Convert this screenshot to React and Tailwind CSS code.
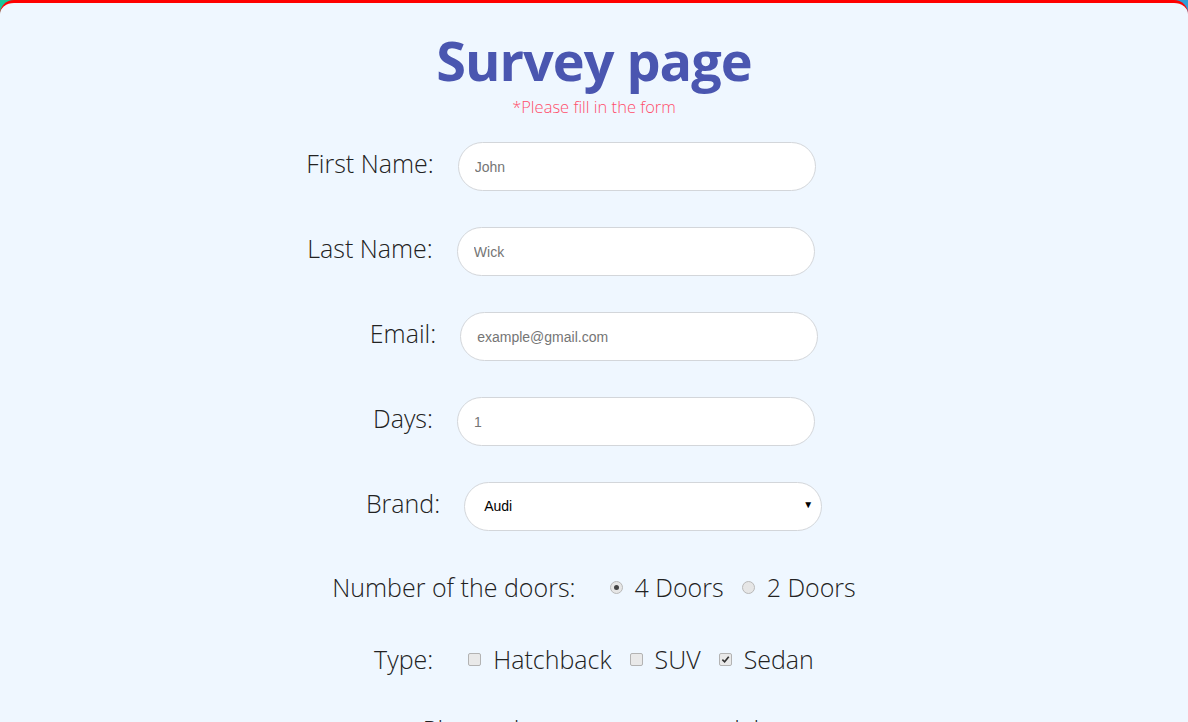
import React from "react";

const labelFont = { fontFamily: '"Open Sans", "Noto Sans", sans-serif' };

function Row({ label, children, shift }) {
  return (
    <div className={`flex items-center justify-center gap-[24px] ${shift ? "pr-[66px]" : ""}`}>
      <span className="pb-[8px] text-[25px] font-light leading-[32px] text-[#222]" style={labelFont}>
        {label}
      </span>
      {children}
    </div>
  );
}

function TextInput({ placeholder, type = "text" }) {
  return (
    <input
      type={type}
      placeholder={placeholder}
      className="h-[49px] w-[358px] rounded-full border border-[#d3d6da] bg-white px-[16px] text-[14px] text-black placeholder:text-[#757575] outline-none"
      style={{ fontFamily: '"Liberation Sans", Arial, sans-serif' }}
    />
  );
}

function Radio({ checked }) {
  return (
    <span className="flex h-[13px] w-[13px] items-center justify-center rounded-full border border-[#b9b9b9] bg-[#e6e6e6]">
      {checked && <span className="h-[5px] w-[5px] rounded-full bg-[#444]" />}
    </span>
  );
}

function Check({ checked }) {
  return (
    <span className="flex h-[13px] w-[13px] items-center justify-center rounded-[2px] border border-[#b3b3b3] bg-[#e9e9e9]">
      {checked && (
        <svg width="9" height="9" viewBox="0 0 10 10">
          <path d="M1.5 5.2 L4 7.6 L8.6 2" fill="none" stroke="#333" strokeWidth="1.8" />
        </svg>
      )}
    </span>
  );
}

export default function App() {
  return (
    <div className="h-[722px] overflow-hidden bg-gradient-to-r from-[#16c79a] to-[#2f9fd8]">
      <div className="min-h-[722px] rounded-t-[14px] border-t-[3px] border-[#ff0000] bg-[#eff7ff] pt-[27px]">
        <h1
          className="text-center text-[54px] font-bold leading-[60px] tracking-[-1px] text-[#4a56b0]"
          style={{ fontFamily: '"Open Sans", "Noto Sans", sans-serif' }}
        >
          Survey page
        </h1>
        <p className="mt-[7px] text-center text-[16.5px] font-light leading-[20px] text-[#ff4d6a]" style={labelFont}>
          *Please fill in the form
        </p>

        <div className="mt-[25px] flex flex-col gap-[36px]">
          <Row label="First Name:" shift>
            <TextInput placeholder="John" />
          </Row>
          <Row label="Last Name:" shift>
            <TextInput placeholder="Wick" />
          </Row>
          <Row label="Email:">
            <TextInput placeholder="example@gmail.com" type="email" />
          </Row>
          <Row label="Days:">
            <TextInput placeholder="1" />
          </Row>
          <Row label="Brand:">
            <div
              className="relative flex h-[49px] w-[358px] items-center rounded-full border border-[#d3d6da] bg-white pl-[19px] text-[14px] text-black"
              style={{ fontFamily: '"Liberation Sans", Arial, sans-serif' }}
            >
              Audi
              <span className="absolute right-[8px] top-[17px] text-[10px] leading-none">▼</span>
            </div>
          </Row>
        </div>

        <div className="mt-[40px] flex items-center justify-center text-[25px] font-light leading-[32px] text-[#222]" style={labelFont}>
          <span>Number of the doors:</span>
          <span className="ml-[34px]"><Radio checked /></span>
          <span className="ml-[12px]">4 Doors</span>
          <span className="ml-[18px]"><Radio /></span>
          <span className="ml-[12px]">2 Doors</span>
        </div>

        <div className="mt-[40px] flex items-center justify-center text-[25px] font-light leading-[32px] text-[#222]" style={labelFont}>
          <span>Type:</span>
          <span className="ml-[35px]"><Check /></span>
          <span className="ml-[12px]">Hatchback</span>
          <span className="ml-[18px]"><Check /></span>
          <span className="ml-[12px]">SUV</span>
          <span className="ml-[18px]"><Check checked /></span>
          <span className="ml-[12px]">Sedan</span>
        </div>

        <div className="mt-[38px] flex items-center justify-center text-[25px] font-light leading-[32px] text-[#222]" style={labelFont}>
          <span>Please choose your car model:</span>
        </div>
      </div>
    </div>
  );
}
